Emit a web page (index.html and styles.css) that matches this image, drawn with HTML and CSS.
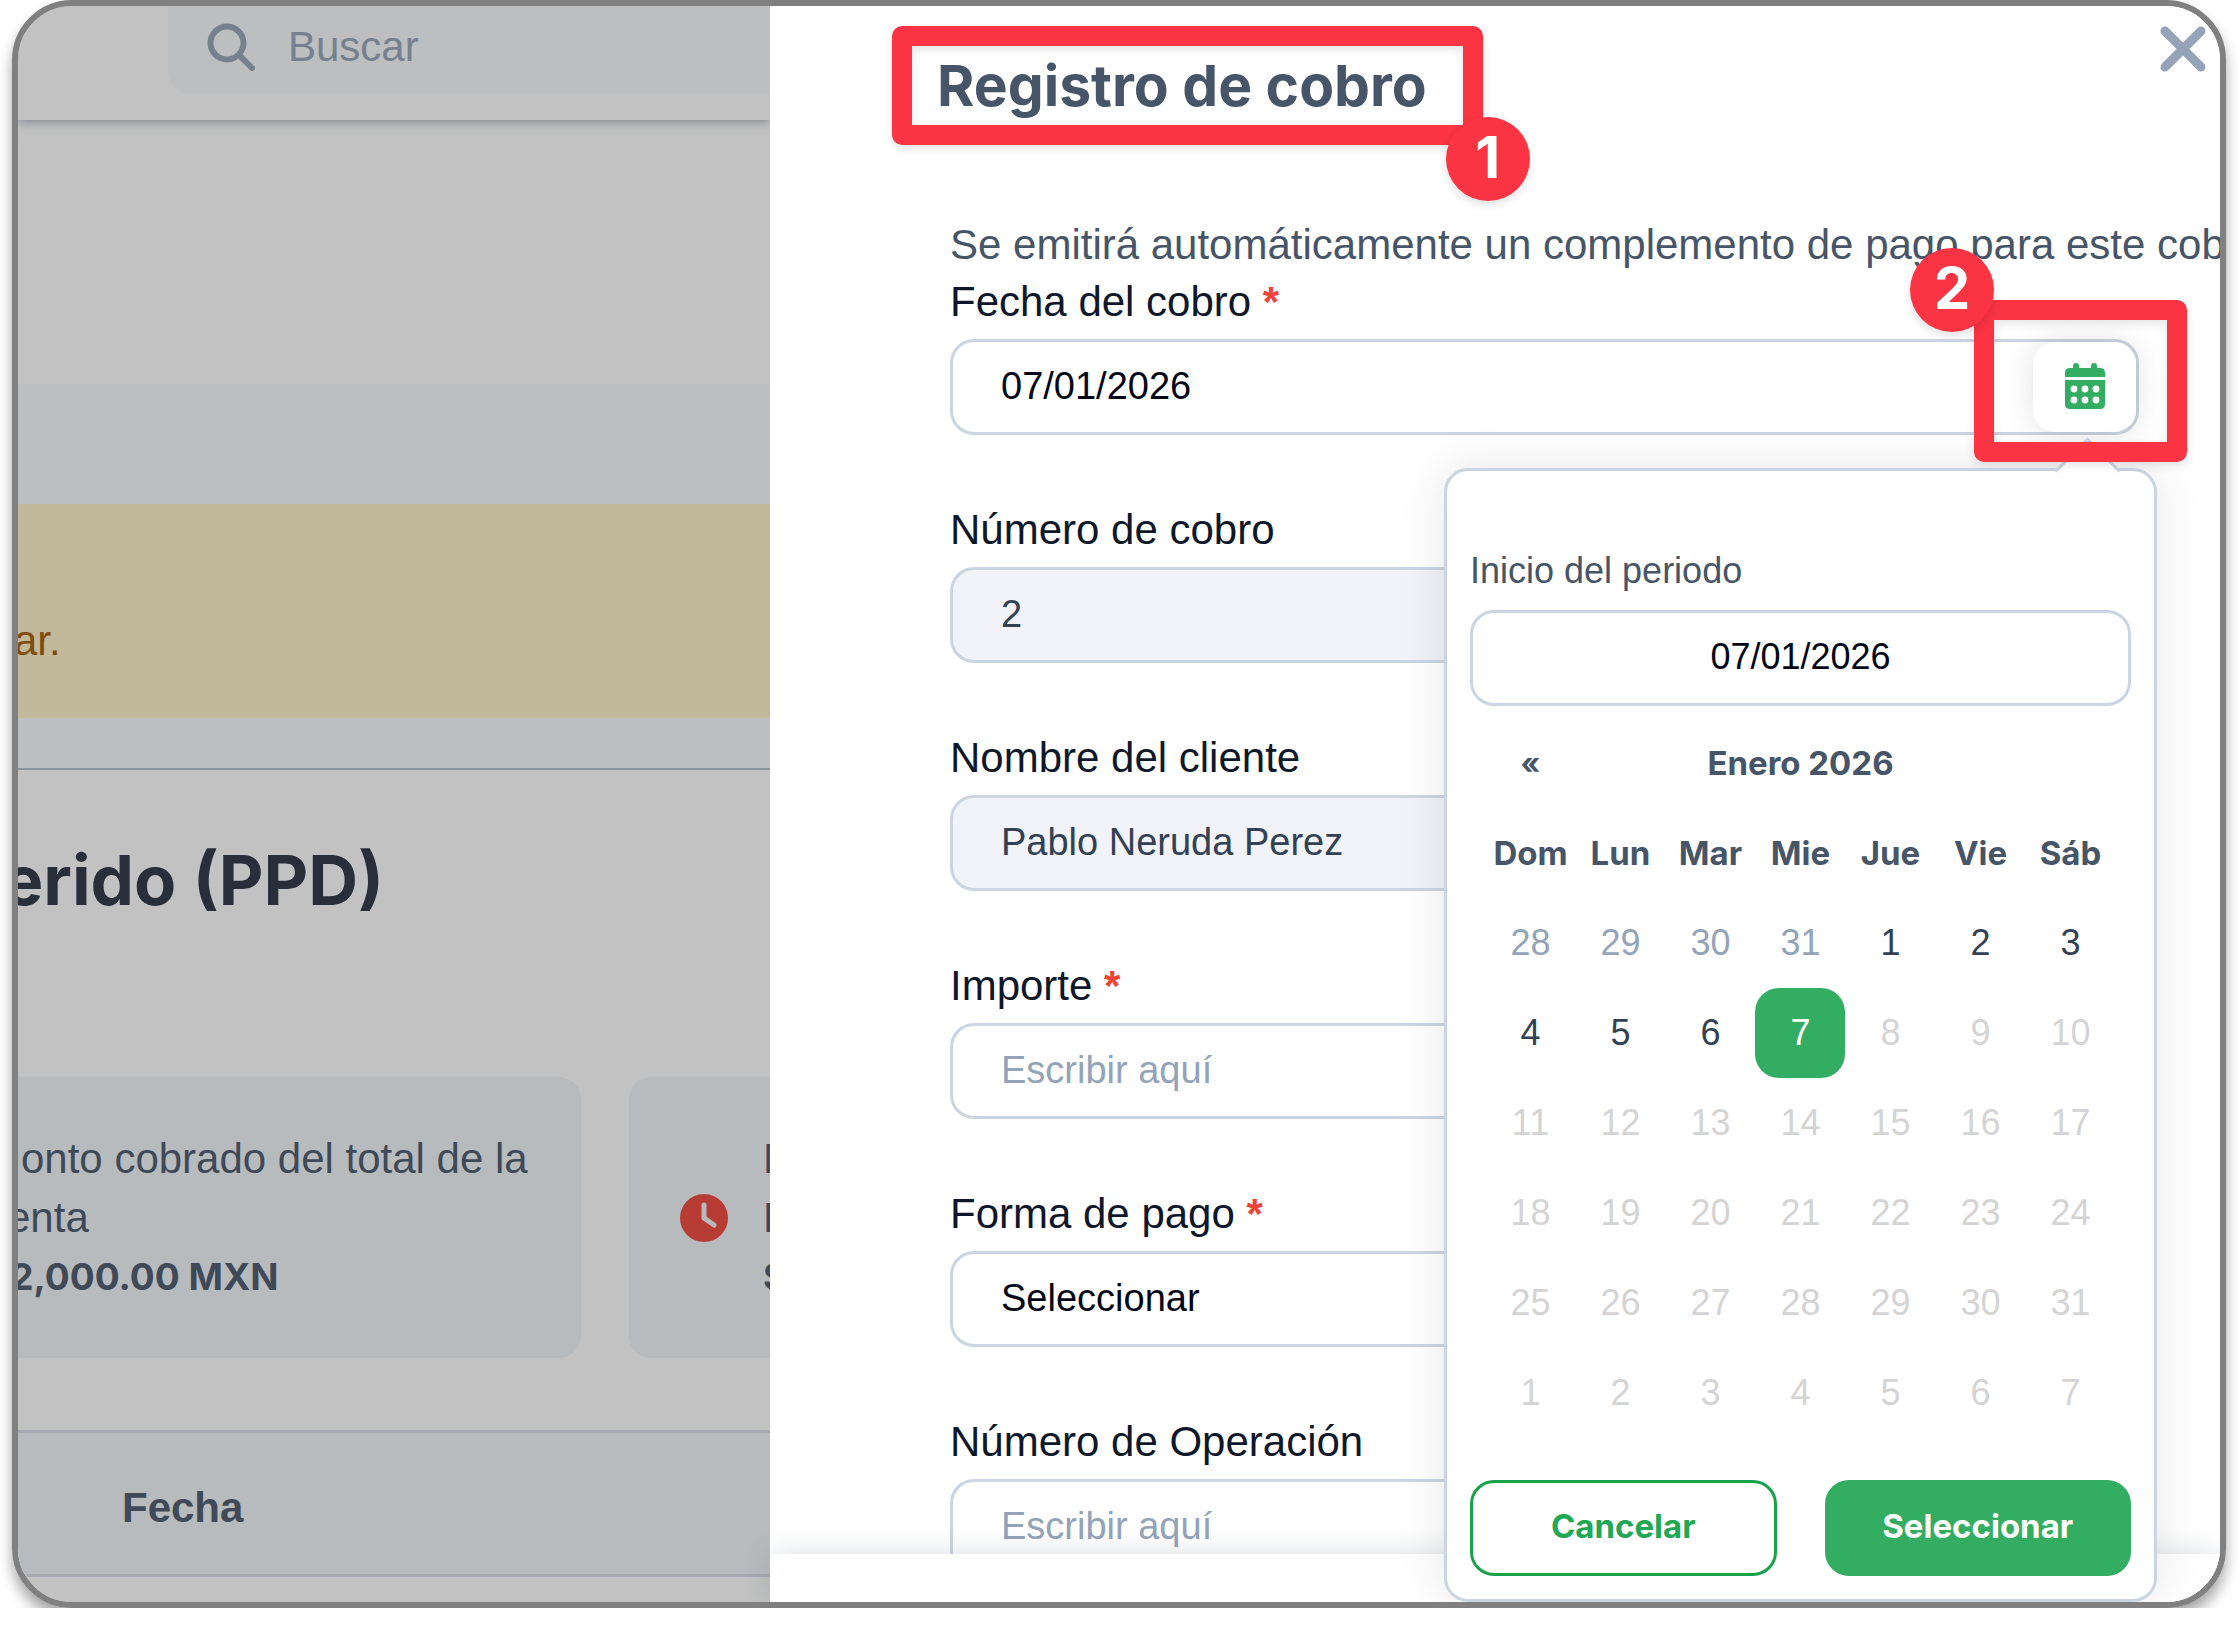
FILE: index.html
```html
<!DOCTYPE html>
<html lang="es">
<head>
<meta charset="utf-8">
<title>Registro de cobro</title>
<link rel="stylesheet" href="styles.css">
</head>

<body>

<div class="frame">

<main class="page">
  <header class="topbar">
    <label class="search">
      <svg class="search-icon" viewBox="0 0 48 48" aria-hidden="true"><circle cx="20" cy="20" r="16.5"/><path d="M32 32L45 45"/></svg>
      <input type="text" placeholder="Buscar" aria-label="Buscar">
    </label>
  </header>
  <div class="blank"></div>
  <div class="band"></div>
  <div class="notice"><p>ar.</p></div>
  <div class="band small"></div>
  <section class="detail">
    <h1>diferido (PPD)</h1>
    <div class="cards">
      <div class="card">
        <p>Monto cobrado del total de la venta<strong>$2,000.00 MXN</strong></p>
      </div>
      <div class="card">
        <svg class="clock" viewBox="0 0 48 48" aria-hidden="true"><circle cx="24" cy="24" r="24"/><path d="M24 11V24L34 31"/></svg>
        <p>Monto<br>Pendiente<strong>$</strong></p>
      </div>
    </div>
  </section>
  <table class="list">
    <tr><th>Fecha</th></tr>
  </table>
  <div class="overlay"></div>
</main>

<aside class="drawer">
  <header class="drawer-head">
    <h2 class="callout">Registro de cobro<span class="badge badge-one">1</span></h2>
    <button class="close" type="button" aria-label="Cerrar">
      <svg viewBox="0 0 46 46"><path d="M5 5L41 41M41 5L5 41"/></svg>
    </button>
  </header>

  <form class="form">
    <p class="intro">Se emitirá automáticamente un complemento de pago para este cobro.</p>

    <div class="field">
      <label for="fecha">Fecha del cobro <span class="req">*</span></label>
      <div class="date">
        <div class="control date-box">
          <input id="fecha" type="text" value="07/01/2026">
          <div class="date-side">
            <button class="date-btn" type="button" aria-label="Abrir calendario">
              <svg viewBox="0 0 40 46">
                <path d="M0 14V10Q0 5 5 5H8V3Q8 0 11 0Q14 0 14 3V5H26V3Q26 0 29 0Q32 0 32 3V5H35Q40 5 40 10V14Z"/>
                <path d="M0 17H40V41Q40 46 35 46H5Q0 46 0 41Z"/>
                <g fill="#fff">
                  <circle cx="9" cy="26" r="3.4"/><circle cx="20" cy="26" r="3.4"/><circle cx="31" cy="26" r="3.4"/>
                  <circle cx="9" cy="37" r="3.4"/><circle cx="20" cy="37" r="3.4"/><circle cx="31" cy="37" r="3.4"/>
                </g>
              </svg>
            </button>
            <div class="callout-box"><span class="badge badge-two">2</span></div>
          </div>
        </div>

        <div class="picker">
          <label for="inicio">Inicio del periodo</label>
          <input id="inicio" class="control" type="text" value="07/01/2026">
          <table class="calendar">
            <colgroup><col span="7" class="day"></colgroup>
            <thead>
              <tr><th><button type="button" class="prev" aria-label="Mes anterior">«</button></th><th colspan="5">Enero 2026</th><th></th></tr>
              <tr><th>Dom</th><th>Lun</th><th>Mar</th><th>Mie</th><th>Jue</th><th>Vie</th><th>Sáb</th></tr>
            </thead>
            <tbody>
              <tr>
                <td><button type="button" class="old">28</button></td><td><button type="button" class="old">29</button></td><td><button type="button" class="old">30</button></td><td><button type="button" class="old">31</button></td><td><button type="button">1</button></td><td><button type="button">2</button></td><td><button type="button">3</button></td>
              </tr>
              <tr>
                <td><button type="button">4</button></td><td><button type="button">5</button></td><td><button type="button">6</button></td><td><button type="button" class="active">7</button></td><td><button type="button" disabled>8</button></td><td><button type="button" disabled>9</button></td><td><button type="button" disabled>10</button></td>
              </tr>
              <tr>
                <td><button type="button" disabled>11</button></td><td><button type="button" disabled>12</button></td><td><button type="button" disabled>13</button></td><td><button type="button" disabled>14</button></td><td><button type="button" disabled>15</button></td><td><button type="button" disabled>16</button></td><td><button type="button" disabled>17</button></td>
              </tr>
              <tr>
                <td><button type="button" disabled>18</button></td><td><button type="button" disabled>19</button></td><td><button type="button" disabled>20</button></td><td><button type="button" disabled>21</button></td><td><button type="button" disabled>22</button></td><td><button type="button" disabled>23</button></td><td><button type="button" disabled>24</button></td>
              </tr>
              <tr>
                <td><button type="button" disabled>25</button></td><td><button type="button" disabled>26</button></td><td><button type="button" disabled>27</button></td><td><button type="button" disabled>28</button></td><td><button type="button" disabled>29</button></td><td><button type="button" disabled>30</button></td><td><button type="button" disabled>31</button></td>
              </tr>
              <tr>
                <td><button type="button" disabled>1</button></td><td><button type="button" disabled>2</button></td><td><button type="button" disabled>3</button></td><td><button type="button" disabled>4</button></td><td><button type="button" disabled>5</button></td><td><button type="button" disabled>6</button></td><td><button type="button" disabled>7</button></td>
              </tr>
            </tbody>
          </table>
          <div class="actions">
            <button type="button" class="btn">Cancelar</button>
            <button type="button" class="btn primary">Seleccionar</button>
          </div>
        </div>
      </div>
    </div>

    <div class="field">
      <label for="numero">Número de cobro</label>
      <input id="numero" class="control readonly" type="text" value="2" readonly>
    </div>
    <div class="field">
      <label for="cliente">Nombre del cliente</label>
      <input id="cliente" class="control readonly" type="text" value="Pablo Neruda Perez" readonly>
    </div>
    <div class="field">
      <label for="importe">Importe <span class="req">*</span></label>
      <input id="importe" class="control" type="text" placeholder="Escribir aquí">
    </div>
    <div class="field">
      <label for="forma">Forma de pago <span class="req">*</span></label>
      <select id="forma" class="control"><option>Seleccionar</option></select>
    </div>
    <div class="field">
      <label for="operacion">Número de Operación</label>
      <input id="operacion" class="control" type="text" placeholder="Escribir aquí">
    </div>
  </form>

  <footer class="drawer-foot"></footer>
</aside>

</div>

</body>
</html>
```
FILE: styles.css
```css
* {
 box-sizing: border-box;
}
body {
 margin: 0;
 background: #fff;
 color: #475569;
 font-family: "Liberation Sans", Arial, sans-serif;
 font-size: 42px;
}
h1, h2, p {
 margin: 0;
}
input, select, button {
 font-family: inherit;
 margin: 0;
}
button {
 padding: 0;
 border: 0;
 background: none;
}
.frame {
 display: grid;
 grid-template-columns: minmax(0, 752fr) minmax(0, 1450fr);
 height: calc(100vh - 24px);
 margin: 0 12px;
 border: 6px solid #808080;
 border-radius: 60px;
 overflow: hidden;
 box-shadow: 0 10px 14px rgba(0, 0, 0, 0.35);
}

/* page behind the drawer */
.page {
 position: relative;
 overflow: hidden;
}
.overlay {
 position: absolute;
 inset: 0;
 background: rgba(44, 44, 44, 0.29);
}
.topbar {
 position: relative;
 height: 114px;
 padding-left: 150px;
 box-shadow: 0 2px 10px rgba(71, 85, 105, 0.5);
}
.search {
 display: flex;
 align-items: center;
 gap: 33px;
 height: 88px;
 padding: 0 0 6px 39px;
 border-radius: 0 0 0 22px;
 background: #f8fafc;
}
.search-icon {
 flex: none;
 width: 48px;
 height: 48px;
 fill: none;
 stroke: #94a3b8;
 stroke-width: 6;
 stroke-linecap: round;
}
.search input {
 flex: 1;
 min-width: 0;
 padding: 0;
 border: 0;
 background: none;
 font-size: 42px;
}
input::placeholder {
 color: #94a3b8;
 opacity: 1;
}
.blank {
 height: 264px;
}
.band {
 height: 120px;
 background: #f8fafc;
}
.notice {
 padding: 107px 0 48px;
 background: #fef3c7;
 color: #a35a05;
 line-height: 59px;
}
.band.small {
 height: 52px;
 border-bottom: 2px solid #b4bfcc;
}
.notice p {
 margin-left: -4px;
}
.detail {
 margin-left: -166px;
 padding: 68px 0 72px;
}
h1 {
 margin-left: 62px;
 color: #273041;
 font: 700 69px/84px Inter, sans-serif;
}
.cards {
 display: grid;
 grid-template-columns: repeat(2, 729px);
 gap: 48px;
 margin-top: 155px;
}
.card {
 display: flex;
 align-items: center;
 height: 281px;
 padding: 0 51px;
 border-radius: 22px;
 background: #f1f5f9;
 line-height: 59px;
}
.card p {
 margin-left: 35px;
}
.card p:only-child {
 margin-left: 83px;
}
.card strong {
 display: block;
 font: 700 37px/59px Inter, sans-serif;
}
.clock {
 flex: none;
 width: 48px;
 height: 48px;
 fill: #f04438;
}
.clock path {
 fill: none;
 stroke: #f1f5f9;
 stroke-width: 5;
 stroke-linecap: round;
 stroke-linejoin: round;
}
.list {
 width: 100%;
 border-collapse: collapse;
 border-top: 3px solid #d9dde8;
 border-bottom: 3px solid #d9dde8;
 background: #f1f5f9;
 font-size: 42px;
}
.list th {
 height: 144px;
 padding: 8px 0 0 104px;
 text-align: left;
}

/* drawer */
.drawer {
 display: flex;
 flex-direction: column;
 min-height: 0;
 background: #fff;
}
.drawer-head {
 display: flex;
 align-items: flex-start;
 justify-content: space-between;
 padding: 20px 14px 0 122px;
}
.callout {
 position: relative;
 padding: 0 36px 0 25px;
 border: 20px solid #fa3442;
 border-radius: 10px;
 color: #475569;
 font: 700 57px/79px Inter, sans-serif;
 box-shadow: 0 4px 10px rgba(0, 0, 0, 0.1), inset 0 4px 10px rgba(0, 0, 0, 0.1);
}
.badge {
 position: absolute;
 width: 84px;
 height: 84px;
 border-radius: 50%;
 background: #fa3442;
 color: #fff;
 font: 700 58px/80px Inter, sans-serif;
 text-align: center;
 box-shadow: 0 4px 8px rgba(0, 0, 0, 0.12);
}
.badge-one {
 right: -67px;
 bottom: -76px;
}
.badge-two {
 left: -84px;
 top: -72px;
}
.close {
 height: 46px;
}
.close svg {
 display: block;
 width: 46px;
 height: 46px;
 stroke: #94a3b8;
 stroke-width: 9;
 stroke-linecap: round;
}
.form {
 flex: 1;
 display: flex;
 flex-direction: column;
 gap: 66px;
 min-height: 0;
 padding: 71px 81px 0 180px;
}
.intro {
 margin-bottom: -66px;
 line-height: 57px;
 white-space: nowrap;
}
.field > label {
 display: block;
 margin-bottom: 9px;
 color: #0f172a;
 line-height: 57px;
}
.req {
 color: #f04438;
 font-weight: 700;
}
.control {
 display: block;
 width: 100%;
 height: 96px;
 padding: 0 48px 2px;
 border: 3px solid #cbd5e1;
 border-radius: 24px;
 background: #fff;
 color: #020617;
 font-size: 38px;
 appearance: none;
}
.control.readonly {
 background: #f1f3f8;
 color: #334155;
}
.date {
 position: relative;
}
.date-box {
 display: flex;
 padding: 0;
}
.date-box input {
 flex: 1;
 min-width: 0;
 padding: 0 48px 2px;
 border: 0;
 border-radius: 24px;
 background: none;
 color: #020617;
 font-size: 38px;
}
.date-side {
 position: relative;
 display: flex;
}
.date-btn {
 display: flex;
 align-items: center;
 justify-content: center;
 width: 103px;
 padding-bottom: 3px;
 border-radius: 22px;
 background: #fff;
 box-shadow: 0 0 30px rgba(0, 0, 0, 0.12);
}
.date-btn svg {
 width: 40px;
 height: 46px;
 fill: #33ad61;
}
.callout-box {
 position: absolute;
 z-index: 3;
 inset: -42px -51px -30px -59px;
 border: 20px solid #fa3442;
 border-radius: 10px;
 box-shadow: 0 4px 10px rgba(0, 0, 0, 0.1), inset 0 4px 10px rgba(0, 0, 0, 0.1);
}
.picker {
 position: absolute;
 z-index: 2;
 top: calc(100% + 33px);
 right: -18px;
 width: 713px;
 padding: 75px 23px 23px;
 border: 3px solid #cbd5e1;
 border-radius: 24px;
 background: #fff;
 font-size: 36px;
 box-shadow: 0 0 50px rgba(0, 0, 0, 0.1);
}
/* arrow pointing at the calendar button */
.picker::before {
 content: "";
 position: absolute;
 top: -24px;
 right: 43px;
 width: 44px;
 height: 44px;
 border: solid #cbd5e1;
 border-width: 3px 0 0 3px;
 background: linear-gradient(135deg, #fff 50%, transparent 50%);
 transform: rotate(45deg);
}
.picker label {
 display: block;
 margin-bottom: 14px;
 line-height: 50px;
}
.picker .control {
 font-size: 36px;
 text-align: center;
}
.calendar {
 width: 630px;
 margin: 12px auto 42px;
 border-collapse: collapse;
 table-layout: fixed;
}
.day {
 width: 90px;
}
.calendar th, .calendar td {
 height: 90px;
 padding: 0;
 text-align: center;
}
.calendar th {
 font: 700 33px/88px Inter, sans-serif;
}
.calendar button {
 display: block;
 width: 90px;
 height: 90px;
 border-radius: 24px;
 color: #334155;
 font-size: 36px;
}
.calendar .prev {
 color: #475569;
 font: 700 30px/88px Inter, sans-serif;
}
.calendar .old {
 color: #94a3b8;
}
.calendar button:disabled {
 color: #d4d4d4;
}
.calendar .active {
 background: #33ad61;
 color: #fff;
}
.actions {
 display: grid;
 grid-template-columns: 1fr 1fr;
 gap: 48px;
}
.btn {
 height: 96px;
 padding-bottom: 4px;
 border: 3px solid #16a34a;
 border-radius: 24px;
 color: #22a755;
 font: 700 33px/48px Inter, sans-serif;
}
.btn.primary {
 border-color: #33ad61;
 background: #33ad61;
 color: #fff;
}
.drawer-foot {
 position: relative;
 z-index: 1;
 height: 48px;
 background: #fff;
 box-shadow: 0 0 28px rgba(71, 85, 105, 0.2);
}
```
